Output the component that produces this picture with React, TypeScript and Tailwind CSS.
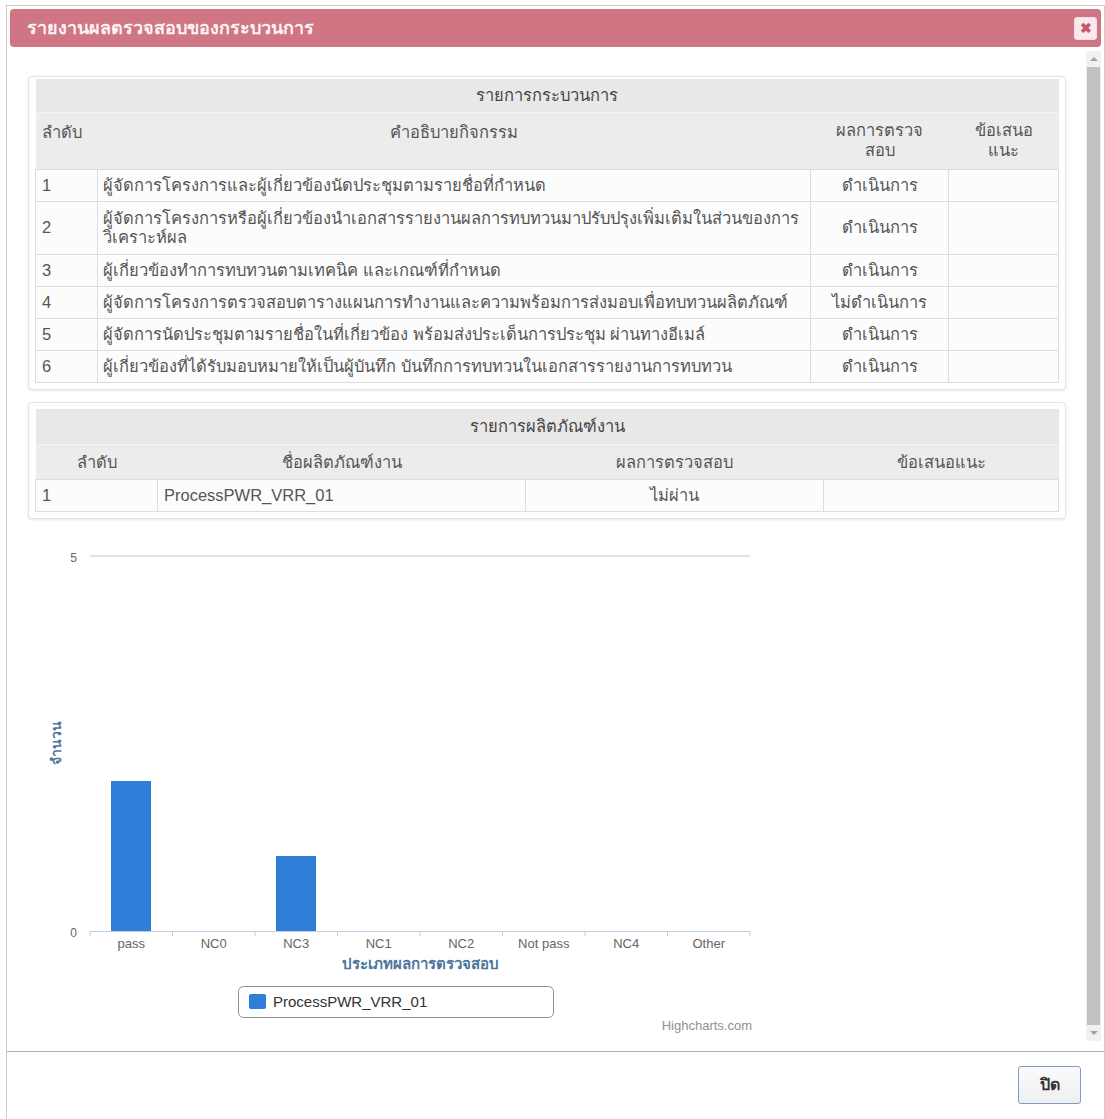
import type { ReactNode } from "react";

const processRows = [
  { no: "1", text: "ผู้จัดการโครงการและผู้เกี่ยวข้องนัดประชุมตามรายชื่อที่กำหนด", result: "ดำเนินการ" },
  {
    no: "2",
    text: "ผู้จัดการโครงการหรือผู้เกี่ยวข้องนำเอกสารรายงานผลการทบทวนมาปรับปรุงเพิ่มเติมในส่วนของการวิเคราะห์ผล",
    result: "ดำเนินการ",
  },
  { no: "3", text: "ผู้เกี่ยวข้องทำการทบทวนตามเทคนิค และเกณฑ์ที่กำหนด", result: "ดำเนินการ" },
  { no: "4", text: "ผู้จัดการโครงการตรวจสอบตารางแผนการทำงานและความพร้อมการส่งมอบเพื่อทบทวนผลิตภัณฑ์", result: "ไม่ดำเนินการ" },
  { no: "5", text: "ผู้จัดการนัดประชุมตามรายชื่อในที่เกี่ยวข้อง พร้อมส่งประเด็นการประชุม ผ่านทางอีเมล์", result: "ดำเนินการ" },
  { no: "6", text: "ผู้เกี่ยวข้องที่ได้รับมอบหมายให้เป็นผู้บันทึก บันทึกการทบทวนในเอกสารรายงานการทบทวน", result: "ดำเนินการ" },
];

const categories = ["pass", "NC0", "NC3", "NC1", "NC2", "Not pass", "NC4", "Other"];
const counts = [2, 0, 1, 0, 0, 0, 0, 0];

function Well({ children, className = "" }: { children: ReactNode; className?: string }) {
  return (
    <div className={`rounded-[4px] border border-[#e4e4e4] bg-white px-[6px] pt-[2px] pb-[6px] shadow-[0_1px_3px_rgba(0,0,0,0.10)] ${className}`}>
      {children}
    </div>
  );
}

function ProcessTable() {
  return (
    <table className="w-[1023px] table-fixed border-collapse text-[16.5px] text-[#555]">
      <colgroup>
        <col className="w-[62px]" />
        <col className="w-[713px]" />
        <col className="w-[138px]" />
        <col className="w-[110px]" />
      </colgroup>
      <thead>
        <tr className="h-[33px] bg-[#e8e8e8]">
          <th colSpan={4} className="border-b border-[#f4f4f4] text-center font-normal text-[#444]">
            รายการกระบวนการ
          </th>
        </tr>
        <tr className="h-[57px] bg-[#ececec] align-top">
          <th className="px-[6px] pt-[7px] text-left font-normal">ลำดับ</th>
          <th className="pt-[7px] text-center font-normal">คำอธิบายกิจกรรม</th>
          <th className="pt-[7px] text-center font-normal leading-[20px]">
            ผลการตรวจ
            <br />
            สอบ
          </th>
          <th className="pt-[7px] text-center font-normal leading-[20px]">
            ข้อเสนอ
            <br />
            แนะ
          </th>
        </tr>
      </thead>
      <tbody>
        {processRows.map((r) => (
          <tr key={r.no} className="bg-[#fcfcfc]">
            <td className="h-[32px] border border-[#dddddd] px-[6px]">{r.no}</td>
            <td className={`border border-[#dddddd] px-[5px] leading-[19px] ${r.no === "2" ? "py-[7px]" : "py-[5px]"}`}>
              {r.text}
            </td>
            <td className="border border-[#dddddd] text-center">{r.result}</td>
            <td className="border border-[#dddddd]" />
          </tr>
        ))}
      </tbody>
    </table>
  );
}

function ProductTable() {
  return (
    <table className="w-[1023px] table-fixed border-collapse text-[16.5px] text-[#555]">
      <colgroup>
        <col className="w-[122px]" />
        <col className="w-[368px]" />
        <col className="w-[298px]" />
        <col className="w-[235px]" />
      </colgroup>
      <thead>
        <tr className="h-[36px] bg-[#e8e8e8]">
          <th colSpan={4} className="border-b border-[#f4f4f4] text-center font-normal text-[#444]">
            รายการผลิตภัณฑ์งาน
          </th>
        </tr>
        <tr className="h-[35px] bg-[#ececec]">
          <th className="text-center font-normal">ลำดับ</th>
          <th className="text-center font-normal">ชื่อผลิตภัณฑ์งาน</th>
          <th className="text-center font-normal">ผลการตรวจสอบ</th>
          <th className="text-center font-normal">ข้อเสนอแนะ</th>
        </tr>
      </thead>
      <tbody>
        <tr className="bg-[#fcfcfc]">
          <td className="h-[32px] border border-[#dddddd] px-[6px]">1</td>
          <td className="border border-[#dddddd] px-[6px]">ProcessPWR_VRR_01</td>
          <td className="border border-[#dddddd] text-center">ไม่ผ่าน</td>
          <td className="border border-[#dddddd]" />
        </tr>
      </tbody>
    </table>
  );
}

// column chart, plot area runs x 62..722, y 30..405 (5 units, 75px each)
function ResultChart() {
  const left = 62;
  const bottom = 405;
  const step = 82.5;
  const unit = 75;
  return (
    <svg width="740" height="515" className="mt-[7px] block" fontFamily="'Liberation Sans', 'Noto Sans', sans-serif">
      <line x1={left} x2={722} y1={30} y2={30} stroke="#c8c8c8" strokeWidth="1" />
      <text x="49" y="36" fontSize="12" fill="#666" textAnchor="end">5</text>
      <text x="49" y="411" fontSize="12" fill="#666" textAnchor="end">0</text>
      <text
        transform="translate(33 217) rotate(-90)"
        fontSize="14"
        fontWeight="bold"
        fill="#4d759e"
        textAnchor="middle"
      >
        จำนวน
      </text>
      {counts.map((c, i) =>
        c > 0 ? (
          <rect key={i} x={left + i * step + 21} y={bottom - c * unit} width={40} height={c * unit} fill="#2f7ed8" />
        ) : null,
      )}
      <line x1={left} x2={722} y1={bottom + 0.5} y2={bottom + 0.5} stroke="#c0d0e0" strokeWidth="1" />
      {Array.from({ length: 9 }, (_, i) => (
        <line key={i} x1={left + i * step} x2={left + i * step} y1={bottom} y2={bottom + 5} stroke="#c0d0e0" />
      ))}
      {categories.map((c, i) => (
        <text key={c} x={left + i * step + step / 2} y={422} fontSize="13" fill="#666" textAnchor="middle">
          {c}
        </text>
      ))}
      <text x="392" y="443" fontSize="15" fontWeight="bold" fill="#4d759e" textAnchor="middle">
        ประเภทผลการตรวจสอบ
      </text>
      <rect x="210.5" y="460.5" width="315" height="31" rx="5" fill="white" stroke="#909090" />
      <rect x="221" y="468" width="17" height="15" rx="2" fill="#2f7ed8" />
      <text x="245" y="481" fontSize="15" fill="#333">ProcessPWR_VRR_01</text>
      <text x="724" y="504" fontSize="13" fill="#909090" textAnchor="end">Highcharts.com</text>
    </svg>
  );
}

function Scrollbar() {
  return (
    <div className="mt-[4px] flex h-[990px] w-[16px] flex-col bg-[#f1f1f1]">
      <div className="flex h-[16px] items-center justify-center">
        <div className="h-0 w-0 border-x-[4px] border-b-[4px] border-x-transparent border-b-[#a3a3a3]" />
      </div>
      <div className="mx-[1px] flex-1 bg-[#c1c1c1]" />
      <div className="flex h-[16px] items-center justify-center">
        <div className="h-0 w-0 border-x-[4px] border-t-[4px] border-x-transparent border-t-[#a3a3a3]" />
      </div>
    </div>
  );
}

export default function App() {
  return (
    <div className="min-h-[1119px] overflow-hidden bg-white font-['Liberation_Sans','Noto_Sans',sans-serif]">
      <div className="ml-[6px] mt-[5px] h-[1120px] w-[1099px] border border-[#dcc4c8] p-[3px]">
        <div className="flex h-[38px] items-center justify-between rounded-[4px] bg-[#cf7583] pl-[17px] pr-[4px]">
          <span className="text-[18px] font-bold text-[#fdf3f4]">รายงานผลตรวจสอบของกระบวนการ</span>
          <button className="flex h-[23px] w-[23px] items-center justify-center rounded-[3px] border border-[#f3dde1] bg-[#f8e9ec] text-[14px] font-bold text-[#c5566c]">
            ✖
          </button>
        </div>
        <div className="flex h-[1004px] overflow-hidden">
          <div className="flex-1 pl-[18px] pr-[20px] pt-[29px]">
            <Well>
              <ProcessTable />
            </Well>
            <Well className="mt-[12px] pt-[6px]">
              <ProductTable />
            </Well>
            <ResultChart />
          </div>
          <Scrollbar />
        </div>
        <div className="-mx-[3px] border-t border-[#b4b4b4]" />
        <div className="flex justify-end pr-[20px] pt-[14px]">
          <button className="h-[38px] w-[63px] rounded-[3px] border border-[#7f9dc7] bg-gradient-to-b from-[#fafafa] to-[#efefef] text-[16px] font-bold text-[#333]">
            ปิด
          </button>
        </div>
      </div>
    </div>
  );
}
